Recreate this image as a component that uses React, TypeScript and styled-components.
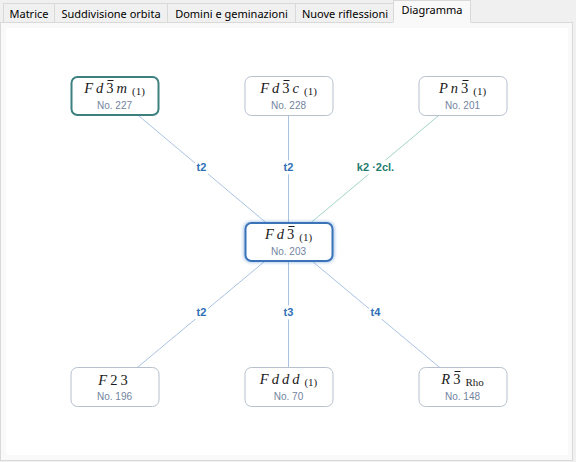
import styled, { createGlobalStyle } from 'styled-components'

const GlobalStyle = createGlobalStyle`
  html, body {
    margin: 0;
    padding: 0;
    background: #f0f0f0;
  }
  body {
    font-family: "Noto Sans", "Liberation Sans", sans-serif;
  }
`

type Tone = 'plain' | 'teal' | 'blue'

type TNode = {
  id: string
  x: number
  y: number
  symbol: string
  sub?: string
  no: number
  tone: Tone
}

type TEdge = {
  to: string
  label: string
  teal?: boolean
}

const tabs = [
  { name: 'Matrice', width: 52 },
  { name: 'Suddivisione orbita', width: 114 },
  { name: 'Domini e geminazioni', width: 129 },
  { name: 'Nuove riflessioni', width: 100 },
  { name: 'Diagramma', width: 78, active: true }
]

const nodes: TNode[] = [
  { id: 'fd3m', x: 108.5, y: 67.5, symbol: 'Fd-3m', sub: '(1)', no: 227, tone: 'teal' },
  { id: 'fd3c', x: 282.5, y: 67.5, symbol: 'Fd-3c', sub: '(1)', no: 228, tone: 'plain' },
  { id: 'pn3', x: 456.5, y: 67.5, symbol: 'Pn-3', sub: '(1)', no: 201, tone: 'plain' },
  { id: 'fd3', x: 282.5, y: 213.5, symbol: 'Fd-3', sub: '(1)', no: 203, tone: 'blue' },
  { id: 'f23', x: 108.5, y: 358.5, symbol: 'F23', no: 196, tone: 'plain' },
  { id: 'fddd', x: 282.5, y: 358.5, symbol: 'Fddd', sub: '(1)', no: 70, tone: 'plain' },
  { id: 'r3', x: 456.5, y: 358.5, symbol: 'R-3', sub: 'Rho', no: 148, tone: 'plain' }
]

const edges: TEdge[] = [
  { to: 'fd3m', label: 't2' },
  { to: 'fd3c', label: 't2' },
  { to: 'pn3', label: 'k2 ·2cl.', teal: true },
  { to: 'f23', label: 't2' },
  { to: 'fddd', label: 't3' },
  { to: 'r3', label: 't4' }
]

const Window = styled.div`
  width: 576px;
  height: 462px;
  display: flex;
  flex-direction: column;
  background: #f0f0f0;
`

const TabBar = styled.div`
  display: flex;
  align-items: flex-end;
  height: 23px;
  padding-left: 3px;
  margin-bottom: -1px;
  position: relative;
  z-index: 1;
`

const Tab = styled.div<{ $w: number; $active?: boolean }>`
  box-sizing: border-box;
  width: ${p => p.$w}px;
  height: ${p => (p.$active ? 23 : 20)}px;
  margin-left: ${p => (p.$active ? -1 : 0)}px;
  margin-right: -1px;
  display: flex;
  align-items: center;
  justify-content: center;
  font-size: 11px;
  color: #000;
  white-space: nowrap;
  background: ${p => (p.$active ? '#f9f9f9' : '#f0f0f0')};
  border: 1px solid #d9d9d9;
  border-bottom: ${p => (p.$active ? '1px solid #f9f9f9' : '1px solid #d9d9d9')};
  padding-bottom: ${p => (p.$active ? 4 : 0)}px;
`

const Panel = styled.div`
  box-sizing: border-box;
  width: 573px;
  height: 439px;
  background: #f9f9f9;
  border: 1px solid #d9d9d9;
  padding: 5px 4px 5px 5px;
  display: flex;
`

const Canvas = styled.div`
  position: relative;
  flex: 1;
  background: #ffffff;
  overflow: hidden;
`

const Edges = styled.svg`
  position: absolute;
  inset: 0;
  width: 100%;
  height: 100%;
`

const EdgeLabel = styled.span<{ $teal?: boolean }>`
  position: absolute;
  transform: translate(-50%, -62%);
  background: #fff;
  padding: 1px 2px;
  font-family: "Liberation Sans", Arial, sans-serif;
  font-size: 11px;
  font-weight: bold;
  white-space: nowrap;
  color: ${p => (p.$teal ? '#1f7d70' : '#2f6fb7')};
`

const borderFor = (tone: Tone) =>
  tone === 'teal' ? '2px solid #3c8080' : tone === 'blue' ? '2px solid #3a73b7' : '1px solid #b7c1cd'

const Node = styled.div<{ $tone: Tone }>`
  position: absolute;
  box-sizing: border-box;
  width: 89px;
  height: 40px;
  transform: translate(-50%, -50%);
  background: #fff;
  border: ${p => borderFor(p.$tone)};
  border-radius: 7px;
  box-shadow: ${p => (p.$tone === 'blue' ? '0 0 3px 1px rgba(80, 140, 210, 0.4)' : 'none')};
  display: flex;
  flex-direction: column;
  align-items: center;
  justify-content: center;
  gap: 2px;
`

const MathTitle = styled.div`
  font-family: "Liberation Serif", "Times New Roman", serif;
  font-size: 14.5px;
  line-height: 16px;
  color: #1a1a1a;
  display: flex;
  align-items: baseline;
  margin-top: 1px;
`

const Letter = styled.span`
  font-style: italic;
  margin-right: 3px;
`

const Digit = styled.span<{ $bar?: boolean }>`
  position: relative;
  margin-right: 3px;

  &::before {
    content: '';
    display: ${p => (p.$bar ? 'block' : 'none')};
    position: absolute;
    left: 1px;
    right: 0;
    top: 0;
    border-top: 1px solid #1a1a1a;
  }
`

const Sub = styled.span`
  font-size: 11px;
  margin-left: 2px;
  position: relative;
  top: 2px;
`

const Number = styled.div`
  font-family: "Liberation Sans", Arial, sans-serif;
  font-size: 10px;
  line-height: 13px;
  color: #7283a0;
`

const SymbolParts = ({ symbol }: { symbol: string }): JSX.Element => {
  const parts: JSX.Element[] = []
  for (let i = 0; i < symbol.length; i++) {
    const ch = symbol[i]
    if (ch === '-') {
      i++
      parts.push(<Digit key={i} $bar>{symbol[i]}</Digit>)
    } else if (/\d/.test(ch)) {
      parts.push(<Digit key={i}>{ch}</Digit>)
    } else {
      parts.push(<Letter key={i}>{ch}</Letter>)
    }
  }
  return <>{parts}</>
}

const Diagram = (): JSX.Element => {
  const hub = nodes.find((n) => n.id === 'fd3')!
  return (
    <Canvas>
      <Edges>
        {edges.map((e) => {
          const n = nodes.find((m) => m.id === e.to)!
          return (
            <line
              key={e.to}
              x1={hub.x}
              y1={hub.y}
              x2={n.x}
              y2={n.y}
              stroke={e.teal ? '#a3d5c8' : '#a9c4e3'}
              strokeWidth={1}
            />
          )
        })}
      </Edges>
      {edges.map((e) => {
        const n = nodes.find((m) => m.id === e.to)!
        return (
          <EdgeLabel
            key={e.to}
            $teal={e.teal}
            style={{ left: (hub.x + n.x) / 2, top: (hub.y + n.y) / 2 }}
          >
            {e.label}
          </EdgeLabel>
        )
      })}
      {nodes.map((n) => (
        <Node key={n.id} $tone={n.tone} style={{ left: n.x, top: n.y }}>
          <MathTitle>
            <SymbolParts symbol={n.symbol} />
            {n.sub && <Sub>{n.sub}</Sub>}
          </MathTitle>
          <Number>No. {n.no}</Number>
        </Node>
      ))}
    </Canvas>
  )
}

const App = (): JSX.Element => (
  <Window>
    <GlobalStyle />
    <TabBar>
      {tabs.map((t) => (
        <Tab key={t.name} $w={t.width} $active={t.active}>{t.name}</Tab>
      ))}
    </TabBar>
    <Panel>
      <Diagram />
    </Panel>
  </Window>
)

export default App
